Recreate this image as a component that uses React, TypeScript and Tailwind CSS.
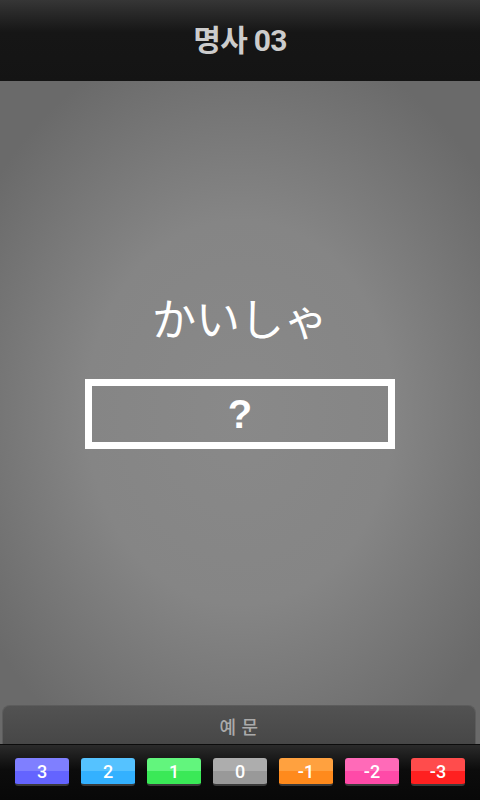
import React from "react";

const scores = [
  { label: "3", top: "bg-[#7f7fff]", bottom: "bg-[#6464ff]" },
  { label: "2", top: "bg-[#55c2ff]", bottom: "bg-[#33b1ff]" },
  { label: "1", top: "bg-[#62f57d]", bottom: "bg-[#3ae957]" },
  { label: "0", top: "bg-[#adadad]", bottom: "bg-[#999999]" },
  { label: "-1", top: "bg-[#ffa13f]", bottom: "bg-[#ff8a1c]" },
  { label: "-2", top: "bg-[#ff6ab8]", bottom: "bg-[#ff4aa8]" },
  { label: "-3", top: "bg-[#ff4c4c]", bottom: "bg-[#ff2020]" },
];

export default function App() {
  return (
    <div className="flex h-[800px] w-[480px] flex-col overflow-hidden bg-[#6a6a6a] font-['Roboto','Noto_Sans_CJK_KR',sans-serif]">
      {/* 상단 타이틀 */}
      <header className="flex h-[81px] shrink-0 items-center justify-center bg-gradient-to-b from-[#363636] via-[#161616] via-40% to-[#141414]">
        <h1 className="text-[30px] font-bold tracking-tight text-[#cccccc]">명사 03</h1>
      </header>

      {/* 카드 영역 */}
      <main className="flex flex-1 flex-col bg-[radial-gradient(ellipse_64%_58%_at_50%_50%,#898989_0%,#858585_50%,#6a6a6a_100%)]">
        <div className="flex flex-1 flex-col items-center pt-[206px]">
          <p className="font-['Noto_Sans_CJK_JP',sans-serif] text-[44px] leading-[60px] text-white">
            かいしゃ
          </p>
          <div className="mt-[32px] flex h-[70px] w-[310px] items-center justify-center border-[7px] border-white">
            <span className="font-['Liberation_Sans',sans-serif] text-[40px] font-bold text-white">?</span>
          </div>
        </div>

        {/* 예문 탭 */}
        <div className="ml-[2px] mr-[4px] flex h-[39px] items-center justify-center rounded-t-[8px] border border-b-0 border-[#5c5c5c] bg-gradient-to-b from-[#525252] to-[#474747] pt-[4px]">
          <span className="text-[18px] font-medium tracking-wide text-[#aaaaaa]">예 문</span>
        </div>
      </main>

      {/* 점수 버튼 */}
      <footer className="flex h-[56px] shrink-0 items-start justify-between border-t border-[#0c0c0c] bg-gradient-to-b from-[#2b2b2b] via-[#0c0c0c] via-45% to-[#080808] px-[15px] pt-[13px]">
        {scores.map((s) => (
          <button
            key={s.label}
            className="flex h-[28px] w-[54px] flex-col overflow-hidden rounded-[3px] border-b-2 border-[#3a3a3a] font-['Roboto',sans-serif]"
          >
            <div className="relative flex h-full w-full flex-col">
              <div className={`h-1/2 w-full ${s.top}`} />
              <div className={`h-1/2 w-full ${s.bottom}`} />
              <span className="absolute inset-0 flex items-center justify-center text-[18px] font-medium text-white">
                {s.label}
              </span>
            </div>
          </button>
        ))}
      </footer>
    </div>
  );
}
